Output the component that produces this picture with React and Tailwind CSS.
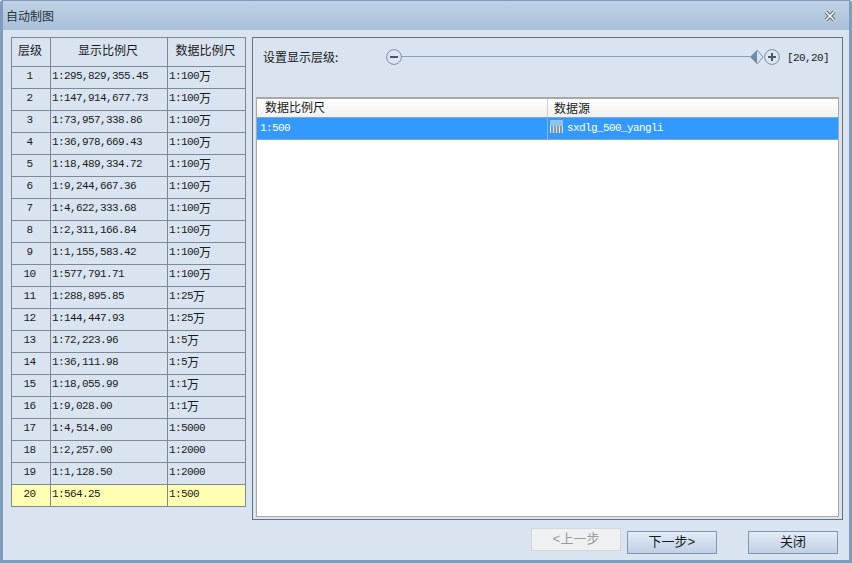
import React from "react";

const cjk = '"Liberation Mono", "Noto Sans CJK SC", monospace';

const rows = [
  [1, "1:295,829,355.45", "1:100", "万"],
  [2, "1:147,914,677.73", "1:100", "万"],
  [3, "1:73,957,338.86", "1:100", "万"],
  [4, "1:36,978,669.43", "1:100", "万"],
  [5, "1:18,489,334.72", "1:100", "万"],
  [6, "1:9,244,667.36", "1:100", "万"],
  [7, "1:4,622,333.68", "1:100", "万"],
  [8, "1:2,311,166.84", "1:100", "万"],
  [9, "1:1,155,583.42", "1:100", "万"],
  [10, "1:577,791.71", "1:100", "万"],
  [11, "1:288,895.85", "1:25", "万"],
  [12, "1:144,447.93", "1:25", "万"],
  [13, "1:72,223.96", "1:5", "万"],
  [14, "1:36,111.98", "1:5", "万"],
  [15, "1:18,055.99", "1:1", "万"],
  [16, "1:9,028.00", "1:1", "万"],
  [17, "1:4,514.00", "1:5000", ""],
  [18, "1:2,257.00", "1:2000", ""],
  [19, "1:1,128.50", "1:2000", ""],
  [20, "1:564.25", "1:500", ""],
];

const Num = ({ children }) => (
  <span className="font-['Liberation_Mono',monospace] text-[11px] tracking-[-0.6px]">{children}</span>
);

const Cn = ({ children, className = "" }) => (
  <span className={`font-['Noto_Sans_CJK_SC',sans-serif] text-[12px] ${className}`}>{children}</span>
);

const RoundBtn = ({ plus }) => (
  <svg width="16" height="16" viewBox="0 0 16 16" className="shrink-0">
    <circle cx="8" cy="8" r="7.4" fill="#dce5f0" stroke="#7e8fa3" />
    <path d={plus ? "M4 8h8M8 4v8" : "M4 8h8"} stroke="#46586c" strokeWidth="2" />
  </svg>
);

const DbIcon = () => (
  <svg width="13" height="14" viewBox="0 0 13 14" className="shrink-0 mb-[3px]">
    <rect x="0" y="0" width="13" height="6" fill="#8fc4e4" />
    <rect x="0" y="6" width="13" height="7" fill="#d8e6f0" />
    <path d="M2 6v7M5 6v7M8 6v7M11 6v7" stroke="#4a6478" strokeWidth="1.2" />
  </svg>
);

const DlgBtn = ({ children, disabled }) => (
  <button
    className={
      disabled
        ? "w-[90px] h-[23px] border border-[#d3d6da] bg-[#eef0f2] text-[#9a9a9a] text-[13px]"
        : "w-[90px] h-[23px] border border-[#7f97b2] bg-gradient-to-b from-[#e3ebf5] to-[#bfd0e5] text-[#1a1a1a] text-[13px]"
    }
    style={{ fontFamily: cjk }}
  >
    {children}
  </button>
);

export default function App() {
  return (
    <div className="w-[852px] h-[563px] overflow-hidden flex flex-col bg-[#d9e4f0] border border-[#7f9cba] border-b-[3px] border-x-[3px] rounded-t-[3px] text-[#1a1a1a]">
      <div className="h-[29px] shrink-0 -mx-[3px] px-[6px] flex items-center justify-between bg-gradient-to-b from-[#c0d2e4] to-[#a9c0d7]">
        <Cn className="text-[#27323e]">自动制图</Cn>
        <svg width="12" height="10" viewBox="0 0 12 10" className="mr-[10px]">
          <path d="M2 1l8 8M10 1l-8 8" stroke="#5d6b79" strokeWidth="3.6" />
          <path d="M2 1l8 8M10 1l-8 8" stroke="#fff" strokeWidth="1.5" />
        </svg>
      </div>

      <div className="flex-1 flex pl-[8px] pt-[7px] gap-[6px]">
        <table className="w-[234px] h-[470px] table-fixed border-collapse self-start">
          <colgroup>
            <col className="w-[39px]" />
            <col className="w-[117px]" />
            <col className="w-[78px]" />
          </colgroup>
          <thead>
            <tr className="h-[29px]">
              {["层级", "显示比例尺", "数据比例尺"].map((h) => (
                <th key={h} className="border border-[#7d8a96] font-normal text-center text-[12px] p-0 pb-[4px] pr-[2px]">
                  <Cn>{h}</Cn>
                </th>
              ))}
            </tr>
          </thead>
          <tbody>
            {rows.map(([level, display, data, unit]) => (
              <tr key={level} className={`h-[22px] ${level === 20 ? "bg-[#ffffb4]" : ""}`}>
                <td className="border border-[#7d8a96] text-center text-[11px] p-0 pb-[5px] pr-[3px] leading-none">
                  <Num>{level}</Num>
                </td>
                <td className="border border-[#7d8a96] text-[11px] p-0 pl-[1px] pb-[5px] leading-none">
                  <Num>{display}</Num>
                </td>
                <td className="border border-[#7d8a96] text-[11px] p-0 pl-[1px] pb-[5px] leading-none">
                  <Num>{data}</Num>
                  {unit && <Cn className="align-[-2px]">{unit}</Cn>}
                </td>
              </tr>
            ))}
          </tbody>
        </table>

        <div className="w-[591px] flex flex-col">
          <div className="h-[483px] border border-[#66727e] flex flex-col px-[3px] pb-[2px]">
            <div className="h-[59px] shrink-0 flex items-center pl-[7px] pr-[10px] pb-[22px]">
              <Cn className="w-[123px]">设置显示层级:</Cn>
              <RoundBtn />
              <div className="flex-1 h-px bg-[#8a9db2]" />
              <svg width="14" height="16" viewBox="0 0 14 16" className="shrink-0">
                <path d="M7 1L0 8l7 7z" fill="#6f8cab" />
                <path d="M7 1l6 7-6 7" fill="#dce5f0" stroke="#7e8fa3" />
              </svg>
              <RoundBtn plus />
              <span className="ml-[7px] mb-[4px]">
                <Num>[20,20]</Num>
              </span>
            </div>
            <div className="flex-1 bg-white border border-[#a8a8a8] border-t-2 flex flex-col">
              <div className="h-[18px] shrink-0 flex items-center bg-gradient-to-b from-white to-[#f0f0f0]">
                <div className="w-[291px] h-full pl-[8px] pb-[2px] border-r border-[#d0d0d0] flex items-center">
                  <Cn>数据比例尺</Cn>
                </div>
                <div className="pl-[6px] pb-[2px]">
                  <Cn>数据源</Cn>
                </div>
              </div>
              <div className="h-[23px] shrink-0 flex items-center bg-[#3399ff] text-white border-y border-[#7fa8d0]">
                <div className="w-[291px] h-full pl-[3px] pb-[1px] border-r border-[#7fb5ea] flex items-center">
                  <Num>1:500</Num>
                </div>
                <div className="pl-[2px] flex items-center gap-[4px]">
                  <DbIcon />
                  <Num>sxdlg_500_yangli</Num>
                </div>
              </div>
            </div>
          </div>

          <div className="flex mt-[8px] pl-[279px]">
            <DlgBtn disabled>&lt;上一步</DlgBtn>
            <div className="ml-[6px]">
              <DlgBtn>下一步&gt;</DlgBtn>
            </div>
            <div className="ml-[31px]">
              <DlgBtn>关闭</DlgBtn>
            </div>
          </div>
        </div>
      </div>
    </div>
  );
}
